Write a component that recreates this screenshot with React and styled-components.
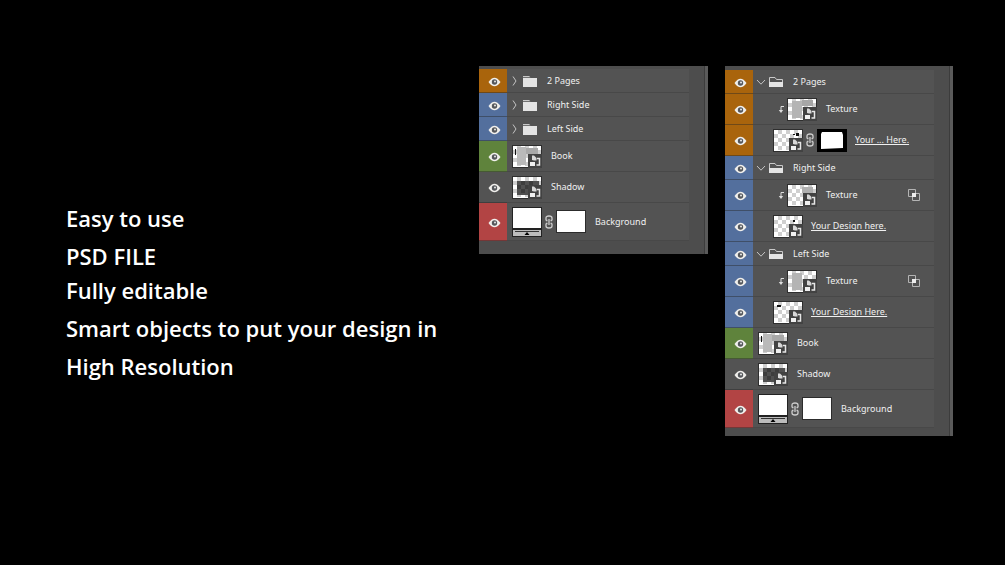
import styled, { createGlobalStyle } from 'styled-components';

const GlobalStyle = createGlobalStyle`
	* {
		box-sizing: border-box;
	}
	body {
		margin: 0;
		background-color: #000;
		font-family: 'Open Sans', sans-serif;
	}
`;

const tagColors = {
	orange: '#a9640c',
	blue: '#536f9d',
	green: '#5f833c',
	red: '#b24444',
	none: '#535353',
};

const rowHeights = {
	group: '24px',
	layer: '31px',
	fill: '38px',
};

const Page = styled.main`
	display: grid;
	grid-template-columns: minmax(0, 413fr) minmax(0, 474fr);
	align-items: start;
	min-height: 100vh;
	padding: 66px 52px 40px 66px;
	background-color: #000;
`;

const Features = styled.ul`
	display: flex;
	flex-direction: column;
	margin: 0;
	padding: 138px 0 0;
	list-style: none;
`;

const Feature = styled.li`
	padding-bottom: ${props => (props.$tight ? '4px' : '8px')};
	color: #fff;
	font-size: 22px;
	font-weight: 600;
	line-height: 28px;
	white-space: nowrap;

	& + & {
		padding-top: 2px;
	}
`;

const Panels = styled.div`
	display: grid;
	grid-template-columns: minmax(0, 229fr) minmax(0, 228fr);
	column-gap: 17px;
	align-items: start;
`;

const Panel = styled.section`
	display: flex;
	padding: ${props => (props.$expanded ? '4px 0 8px' : '3px 0 13px')};
	border-right: 3px solid #5a5a5a;
	background-color: #4d4d4d;
	box-shadow: inset -1px 0 0 #3c3c3c;
`;

const LayerList = styled.ul`
	flex: 1;
	min-width: 0;
	margin: 0 16px 0 0;
	padding: 0;
	list-style: none;
`;

const Row = styled.li`
	display: flex;
	height: ${props => rowHeights[props.$size]};
	background-color: #535353;
`;

const EyeButton = styled.button`
	display: flex;
	flex: none;
	align-items: center;
	justify-content: center;
	width: 28px;
	padding: 2px 0 0 2px;
	border: 0;
	border-bottom: 1px solid rgba(40, 40, 40, 0.45);
	background-color: ${props => tagColors[props.$tag]};
`;

const RowBody = styled.div`
	display: flex;
	flex: 1;
	align-items: center;
	min-width: 0;
	padding: 0 14px 0 ${props => props.$indent}px;
	border-bottom: 1px solid #484848;
`;

const GroupButton = styled.button`
	display: flex;
	flex: none;
	gap: 3px;
	align-items: center;
	padding: 0;
	border: 0;
	background: none;
`;

const Name = styled.span`
	margin-left: ${props => props.$space}px;
	color: #f0f0f0;
	font-family: 'Noto Sans', sans-serif;
	font-size: 9px;
	line-height: 14px;
	white-space: nowrap;
	text-decoration: ${props => (props.$linked ? 'underline' : 'none')};
	text-decoration-skip-ink: none;
`;

const Trailing = styled.span`
	display: flex;
	margin-left: auto;
`;

function EyeIcon() {
	return (
		<svg width="13" height="10" viewBox="0 0 13 10">
			<path d="M0.5 5Q6.5 -3.6 12.5 5Q6.5 13.6 0.5 5Z" fill="#f0efec" />
			<circle cx="6.5" cy="5" r="2.7" fill="#55585c" />
			<circle cx="7" cy="4.4" r="1" fill="#e8e8e8" />
		</svg>
	);
}

function Arrow({ open }) {
	return open ? (
		<svg width="10" height="8" viewBox="0 0 10 8">
			<path d="M1 2L5 6.2L9 2" fill="none" stroke="#c4c4c4" />
		</svg>
	) : (
		<svg width="10" height="12" viewBox="0 0 10 12">
			<path d="M3 1.5L6 6L3 10.5" fill="none" stroke="#c4c4c4" />
		</svg>
	);
}

function FolderIcon({ open }) {
	return (
		<svg width="14" height="12" viewBox="0 0 14 12">
			{open ? (
				<>
					<path d="M0.5 11V1.5H6L7.5 3.5H13.5V11" fill="none" stroke="#c9c9c9" />
					<path d="M0 6H14V11H0Z" fill="#e4e4e4" />
				</>
			) : (
				<>
					<path d="M0 1H6L7.5 2.2H0Z" fill="#c9c9c9" />
					<path d="M0 3H14V12H0Z" fill="#e4e4e4" />
				</>
			)}
		</svg>
	);
}

function Checker() {
	const cells = [];
	for (let y = 0; y < 5; y += 1) {
		for (let x = 0; x < 7; x += 1) {
			if ((x + y) % 2) {
				cells.push(<rect key={`${x}-${y}`} x={1 + x * 4} y={1 + y * 4} width="4" height="4" />);
			}
		}
	}
	return <g fill="#cfcfcf">{cells}</g>;
}

function Thumb({ kind }) {
	return (
		<svg width="30" height="23" viewBox="0 0 30 23">
			<rect width="30" height="23" fill="#2e2e2e" />
			<rect x="1" y="1" width="28" height="21" fill="#fff" />
			<Checker />
			{kind === 'book' && (
				<>
					<rect x="5" y="2" width="9" height="18" fill="#b9b9b9" />
					<rect x="14" y="3" width="12" height="6" fill="#a8a8a8" />
					<rect x="3" y="4" width="1" height="6" fill="#111" />
				</>
			)}
			{kind === 'pages' && (
				<>
					<rect x="5" y="3" width="10" height="17" fill="#b4b4b4" />
					<rect x="15" y="2" width="11" height="6" fill="#a6a6a6" />
				</>
			)}
			{kind === 'left' && <rect x="5" y="3" width="10" height="17" fill="#b4b4b4" />}
			{kind === 'right' && <rect x="15" y="3" width="11" height="6" fill="#b0b0b0" />}
			{kind === 'shadow' && (
				<>
					<rect x="5" y="5" width="22" height="14" fill="#505050" />
					<path d="M9 5h4v4h-4zM17 5h4v4h-4zM5 9h4v4h-4zM13 9h4v4h-4zM9 13h4v4h-4z" fill="#3d3d3d" />
				</>
			)}
			{kind === 'markTop' && <path d="M23 4h3v3h-3zM20 5h2v1h-2z" fill="#111" />}
			{kind === 'markDot' && <rect x="20" y="5" width="2" height="2" fill="#111" />}
			{kind === 'markLeft' && <rect x="4" y="4" width="4" height="2" fill="#111" />}
			<rect x="16" y="9" width="14" height="14" fill="#424242" />
			<rect x="18" y="17" width="5" height="4" fill="#f0f0f0" />
			<path d="M20 15V10.5H22L24.5 13V15.5H22" fill="#d8d8d8" />
			<path d="M25 13.5H27.5V20H24.5" fill="none" stroke="#e6e6e6" strokeWidth="1.5" />
		</svg>
	);
}

function FillThumb() {
	return (
		<svg width="30" height="30" viewBox="0 0 30 30">
			<rect width="30" height="30" fill="#222" />
			<rect x="1" y="1" width="28" height="20" fill="#fff" />
			<rect x="1" y="23" width="28" height="6" fill="#bcbcbc" />
			<path d="M3 24.5H27" stroke="#333" />
			<path d="M12.5 28L15 25L17.5 28Z" fill="#000" />
		</svg>
	);
}

function MaskThumb({ framed }) {
	return (
		<svg width="30" height="23" viewBox="0 0 30 23">
			<rect width="30" height="23" fill={framed ? '#000' : '#2c2c2c'} />
			{framed ? (
				<path d="M5 3L25 3L26 6V19L4 20V5Z" fill="#fff" />
			) : (
				<rect x="1" y="1" width="28" height="21" fill="#fff" />
			)}
		</svg>
	);
}

function ChainIcon() {
	return (
		<svg width="14" height="14" viewBox="0 0 14 14">
			<path
				d="M4 5.5V3Q4 1 7 1T10 3V5.5M4 8.5V11Q4 13 7 13T10 11V8.5M7 4V10M4 5.5H5.5M10 5.5H8.5M4 8.5H5.5M10 8.5H8.5"
				fill="none"
				stroke="#cdcdcd"
				strokeWidth="1.3"
			/>
		</svg>
	);
}

function ClipIcon() {
	return (
		<svg width="9" height="9" viewBox="0 0 9 9">
			<path d="M6 1.5H3V6" fill="none" stroke="#dedede" />
			<path d="M0.8 5H5.2L3 8Z" fill="#dedede" />
		</svg>
	);
}

function BlendIcon() {
	return (
		<svg width="12" height="12" viewBox="0 0 12 12">
			<path d="M0.5 0.5H7.5V7.5H0.5ZM4.5 4.5H11.5V11.5H4.5Z" fill="none" stroke="#b4b4b4" />
			<rect x="4" y="4" width="4" height="4" fill="#ededed" />
		</svg>
	);
}

function Layer({ layer }) {
	const { type, tag, name, open, thumb, clipped, mask, linked, blend } = layer;

	let indent = linked ? 20 : 5;
	let space = linked ? 8 : 9;
	if (type === 'group') {
		indent = 3;
		space = 10;
	}
	if (clipped) {
		indent = 25;
	}

	return (
		<Row $size={type}>
			<EyeButton $tag={tag} aria-label={`Toggle ${name}`}>
				<EyeIcon />
			</EyeButton>
			<RowBody $indent={indent}>
				{type === 'group' && (
					<GroupButton aria-label={`Expand ${name}`} aria-expanded={Boolean(open)}>
						<Arrow open={open} />
						<FolderIcon open={open} />
					</GroupButton>
				)}
				{clipped && <ClipIcon />}
				{thumb && <Thumb kind={thumb} />}
				{type === 'fill' && <FillThumb />}
				{(type === 'fill' || mask) && (
					<>
						<ChainIcon />
						<MaskThumb framed={mask} />
					</>
				)}
				<Name $space={space} $linked={linked}>
					{name}
				</Name>
				{blend && (
					<Trailing>
						<BlendIcon />
					</Trailing>
				)}
			</RowBody>
		</Row>
	);
}

const features = [
	{ text: 'Easy to use' },
	{ text: 'PSD FILE', tight: true },
	{ text: 'Fully editable' },
	{ text: 'Smart objects to put your design in' },
	{ text: 'High Resolution' },
];

const baseLayers = [
	{ type: 'layer', tag: 'green', name: 'Book', thumb: 'book' },
	{ type: 'layer', tag: 'none', name: 'Shadow', thumb: 'shadow' },
	{ type: 'fill', tag: 'red', name: 'Background' },
];

const collapsedLayers = [
	{ type: 'group', tag: 'orange', name: '2 Pages' },
	{ type: 'group', tag: 'blue', name: 'Right Side' },
	{ type: 'group', tag: 'blue', name: 'Left Side' },
	...baseLayers,
];

const expandedLayers = [
	{ type: 'group', tag: 'orange', name: '2 Pages', open: true },
	{ type: 'layer', tag: 'orange', name: 'Texture', thumb: 'pages', clipped: true },
	{ type: 'layer', tag: 'orange', name: 'Your ... Here.', thumb: 'markTop', mask: true, linked: true },
	{ type: 'group', tag: 'blue', name: 'Right Side', open: true },
	{ type: 'layer', tag: 'blue', name: 'Texture', thumb: 'right', clipped: true, blend: true },
	{ type: 'layer', tag: 'blue', name: 'Your Design here.', thumb: 'markDot', linked: true },
	{ type: 'group', tag: 'blue', name: 'Left Side', open: true },
	{ type: 'layer', tag: 'blue', name: 'Texture', thumb: 'left', clipped: true, blend: true },
	{ type: 'layer', tag: 'blue', name: 'Your Design Here.', thumb: 'markLeft', linked: true },
	...baseLayers,
];

function LayersPanel({ layers, expanded }) {
	return (
		<Panel $expanded={expanded}>
			<LayerList>
				{layers.map((layer, index) => (
					<Layer key={index} layer={layer} />
				))}
			</LayerList>
		</Panel>
	);
}

export default function App() {
	return (
		<>
			<GlobalStyle />
			<Page>
				<Features>
					{features.map(feature => (
						<Feature key={feature.text} $tight={feature.tight}>
							{feature.text}
						</Feature>
					))}
				</Features>
				<Panels>
					<LayersPanel layers={collapsedLayers} />
					<LayersPanel layers={expandedLayers} expanded />
				</Panels>
			</Page>
		</>
	);
}
